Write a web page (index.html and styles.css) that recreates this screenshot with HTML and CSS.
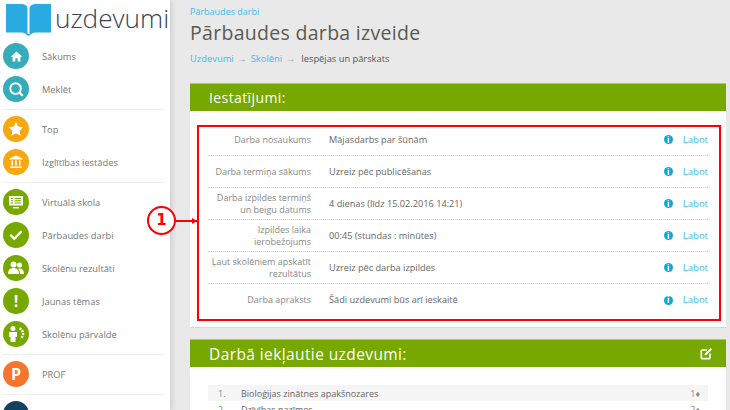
FILE: index.html
```html
<!DOCTYPE html>
<html lang="lv">
<head>
<meta charset="utf-8">
<title>Pārbaudes darba izveide</title>
<link rel="stylesheet" href="styles.css">
</head>
<body>
<div class="page">
  <aside class="sidebar">
    <div class="logo">
      <svg class="book" width="45" height="32" viewBox="0 0 45 32"><path d="M0 0h15c3 0 6 1 6.500 4v27.500c-1-1.500-3-3-6.500-3H0z" fill="#29abe2"/><path d="M45 0H30c-3 0-6 1-6.500 4v27.500c1-1.500 3-3 6.500-3h15z" fill="#29abe2"/><path d="M19 29l3.500 3 3.500-3-2.500 1h-2z" fill="#29abe2"/></svg>
      <span class="logo-text">uzdevumi</span>
    </div>
    <nav class="menu">
      <a class="item"><span class="dot teal"><svg width="13" height="13" viewBox="0 0 14 14"><path d="M7 1.500L.8 7.200h2v5.300h3V9h2.400v3.500h3V7.200h2z" fill="#fff"/></svg></span>Sākums</a>
      <a class="item"><span class="dot teal"><svg width="16" height="16" viewBox="0 0 18 18"><circle cx="8.500" cy="8.500" r="6" fill="none" stroke="#fff" stroke-width="2.200"/><path d="M13 13l3 3" stroke="#fff" stroke-width="2.400" stroke-linecap="round"/></svg></span>Meklēt</a>
      <hr class="sep">
      <a class="item"><span class="dot amber"><svg width="16" height="16" viewBox="0 0 16 16"><path d="M8 1l2.200 4.500 5 .7-3.600 3.500.9 5L8 12.300 3.500 14.700l.9-5L.8 6.200l5-.7z" fill="#fff"/></svg></span>Top</a>
      <a class="item"><span class="dot amber"><svg width="14" height="14" viewBox="0 0 14 14"><path d="M7 .5L13.500 3.500v1H.5v-1zM2.500 5.500h1.500v5H2.500zM6.200 5.500h1.600v5H6.200zM10 5.500h1.500v5H10zM1 11.500h12v1.500H1z" fill="#fff"/></svg></span>Izglītības iestādes</a>
      <hr class="sep">
      <a class="item"><span class="dot green"><svg width="16" height="14" viewBox="0 0 16 14"><path d="M1 1h14v9.500H1z" fill="#fff"/><path d="M5 12.700h6" stroke="#fff" stroke-width="1.500"/><path d="M3 3.500h2M3 5.700h2M3 8h2M6.500 3.500h6.500M6.500 5.700h6.500M6.500 8h6.500" stroke="#76a800" stroke-width="1.100"/></svg></span>Virtuālā skola</a>
      <a class="item"><span class="dot green"><svg width="14" height="14" viewBox="0 0 14 14"><path d="M2 7.500l3.300 3.300L12 3.800" fill="none" stroke="#fff" stroke-width="2.400" stroke-linecap="round"/></svg></span>Pārbaudes darbi</a>
      <a class="item"><span class="dot green"><svg width="16" height="14" viewBox="0 0 16 14"><circle cx="5.500" cy="3.500" r="3" fill="#fff"/><circle cx="11.500" cy="4" r="2.500" fill="#fff"/><path d="M0 13c0-4 2-6 5.500-6s5.500 2 5.500 6zM12 13h4c0-3.500-1.500-5.500-4-5.500-.7 0-1.200.1-1.700.4 1 1.200 1.700 3 1.700 5.100z" fill="#fff"/></svg></span>Skolēnu rezultāti</a>
      <a class="item"><span class="dot green"><span class="glyph">!</span></span>Jaunas tēmas</a>
      <a class="item"><span class="dot green"><svg width="20" height="20" viewBox="0 0 20 20"><circle cx="7" cy="4.500" r="2.500" fill="#fff"/><path d="M3 8h8v5H9.500v5h-5v-5H3z" fill="#fff"/><path d="M13.500 4.500a5.500 5.500 0 0 1 1.500 9.500" fill="none" stroke="#fff" stroke-width="2.400" stroke-dasharray="2 1"/></svg></span>Skolēnu pārvalde</a>
      <hr class="sep">
      <a class="item"><span class="dot orange"><span class="glyph">P</span></span>PROF</a>
      <hr class="sep">
      <a class="item"><span class="dot navy"></span></a>
    </nav>
  </aside>
  <main class="main">
    <a class="crumb-top">Pārbaudes darbi</a>
    <h1 class="title">Pārbaudes darba izveide</h1>
    <div class="crumbs"><a>Uzdevumi</a><span class="arrow">→</span><a>Skolēni</a><span class="arrow">→</span><span class="current">Iespējas un pārskats</span></div>
    <section class="panel">
      <h2 class="panel-head">Iestatījumi:</h2>
      <div class="settings">
        <div class="row"><div class="label">Darba nosaukums</div><div class="value">Mājasdarbs par šūnām</div><span class="info">i</span><a class="edit">Labot</a></div>
        <div class="row"><div class="label">Darba termiņa sākums</div><div class="value">Uzreiz pēc publicēšanas</div><span class="info">i</span><a class="edit">Labot</a></div>
        <div class="row"><div class="label">Darba izpildes termiņš<br>un beigu datums</div><div class="value">4 dienas (līdz 15.02.2016 14:21)</div><span class="info">i</span><a class="edit">Labot</a></div>
        <div class="row"><div class="label">Izpildes laika<br>ierobežojums</div><div class="value">00:45 (stundas : minūtes)</div><span class="info">i</span><a class="edit">Labot</a></div>
        <div class="row"><div class="label">Ļaut skolēniem apskatīt<br>rezultātus</div><div class="value">Uzreiz pēc darba izpildes</div><span class="info">i</span><a class="edit">Labot</a></div>
        <div class="row"><div class="label">Darba apraksts</div><div class="value">Šādi uzdevumi būs arī ieskaitē</div><span class="info">i</span><a class="edit">Labot</a></div>
      </div>
    </section>
    <section class="panel second">
      <h2 class="panel-head large">Darbā iekļautie uzdevumi:<svg class="edit-icon" width="13" height="13" viewBox="0 0 13 13"><path d="M10 6.500V10.500a1.200 1.200 0 0 1-1.200 1.200H2.500a1.200 1.200 0 0 1-1.200-1.200V4.200A1.200 1.200 0 0 1 2.500 3H7" fill="none" stroke="#fff" stroke-width="1.700"/><path d="M4.500 8.500l.5-2L10.500 1l1.500 1.500L6.500 8z" fill="#fff"/></svg></h2>
      <div class="tasks">
        <div class="task odd"><span class="num">1.</span><span class="name">Bioloģijas zinātnes apakšnozares</span><span class="count">1♦</span></div>
        <div class="task"><span class="num">2.</span><span class="name">Dzīvības pazīmes</span><span class="count">2♦</span></div>
      </div>
    </section>
  </main>
  <div class="redbox"></div>
  <div class="callout">1</div>
  <div class="callout-line"></div>
</div>
</body>
</html>
```
FILE: styles.css
```css
* { box-sizing: border-box; }
html, body { margin: 0; height: 410px; overflow: hidden; }
body { font-family: "Open Sans", "Noto Sans", sans-serif; font-size: 9px; color: #666; }
a { color: #3dbbee; text-decoration: none; }

.page { position: relative; display: flex; width: 730px; height: 410px; overflow: hidden; background: #e9e9e9; }

.sidebar {
  flex: 0 0 170px; min-width: 0; height: 410px; padding: 0 6px 0 3px; background-color: #fff;
  box-shadow: 2px 0 5px rgba(0, 0, 0, .12);
}
.logo { display: flex; align-items: flex-start; height: 39.500px; padding: 4px 0 0 3px; }
.book { flex: none; }
.logo-text { margin-left: 4px; margin-top: -6px; font-size: 26.200px; line-height: 40px; font-weight: 300; color: #3a4356; white-space: nowrap; }
.menu { display: flex; flex-direction: column; }
.item { display: flex; align-items: center; height: 33px; color: #777; font-size: 9.300px; }
.dot { display: flex; flex: none; align-items: center; justify-content: center; width: 26px; height: 26px; margin-right: 13px; border-radius: 50%; }
.teal { background: #35acb9; }
.amber { background: #f7a70f; }
.green { background: #76a800; }
.orange { background: #f7742a; }
.navy { background: #12425f; }
.glyph { color: #fff; font-size: 16px; font-weight: 700; line-height: 1; }
.sep { width: 100%; height: 7px; margin: 0; border: 0; background: linear-gradient(#efefef, #efefef) center / 100% 1px no-repeat; }

.main { flex: 1; min-width: 0; padding: 5px 4px 0 20px; }
.crumb-top { display: block; font-size: 9px; line-height: 14px; }
.title { margin: 0; font-size: 19.500px; line-height: 28px; font-weight: 400; letter-spacing: .3px; color: #5a5a52; }
.crumbs { margin-top: 5px; display: flex; align-items: center; font-size: 9.400px; line-height: 14px; }
.arrow { margin: 0 4px 0 3px; color: #999; font-family: "Liberation Sans", sans-serif; font-size: 10px; }
.current { margin-left: 2px; color: #555; font-size: 9.300px; }

.panel { margin-top: 17px; background: #fff; border-bottom: 1px solid #d8d8d8; height: 245px; }
.panel-head {
  display: flex; align-items: center; height: 28px; margin: 0; padding: 0 19px;
  background: #76a800; border-top: 1px solid #a9c66a; color: #fff; font-size: 14px; font-weight: 400; letter-spacing: .4px;
}
.panel-head.large { justify-content: space-between; font-size: 15.500px; padding: 0 13px 0 19px; }
.second { margin-top: 11px; height: auto; }

.settings { padding: 13px 18px 0; }
.row { display: flex; align-items: center; height: 32px; border-bottom: 1px dotted #ccc; line-height: 12px; }
.row:last-child { border-bottom: 0; }
.label { flex: 0 0 103px; text-align: right; color: #888; white-space: nowrap; }
.value { flex: 1; margin-left: 18px; color: #666; font-size: 9.200px; white-space: nowrap; }
.info {
  display: flex; flex: none; align-items: center; justify-content: center; width: 9px; height: 9px; margin-right: 10px; border-radius: 50%;
  background: #0ea5e0; color: #fff; font-size: 8px; font-weight: 700; line-height: 1;
}
.edit { flex: 0 0 24px; font-size: 9.500px; }

.edit-icon { flex: none; }
.tasks { padding: 18px 18px 0; }
.task { display: flex; height: 16px; align-items: center; padding: 0 8px 0 10px; }
.odd { background: #f5f5f5; }
.num { flex: 0 0 23px; color: #888; }
.name { flex: 1; }
.count { color: #888; }

.redbox { position: absolute; left: 197px; top: 125px; width: 524px; height: 196px; border: 2px solid #f00; }
.callout {
  position: absolute; left: 147px; top: 206px; width: 29px; height: 29px; border: 2px solid #f00; border-radius: 50%; background: #fff;
  color: #f00; font-family: "DejaVu Sans", sans-serif; font-size: 15px; font-weight: 700; line-height: 25px; text-align: center;
}
.callout-line { position: absolute; left: 176px; top: 220px; width: 21px; height: 2px; background: #f00; }
.callout-line::after { content: ""; position: absolute; right: 0; top: -2px; border-left: 5px solid #f00; border-top: 3px solid transparent; border-bottom: 3px solid transparent; }
```
